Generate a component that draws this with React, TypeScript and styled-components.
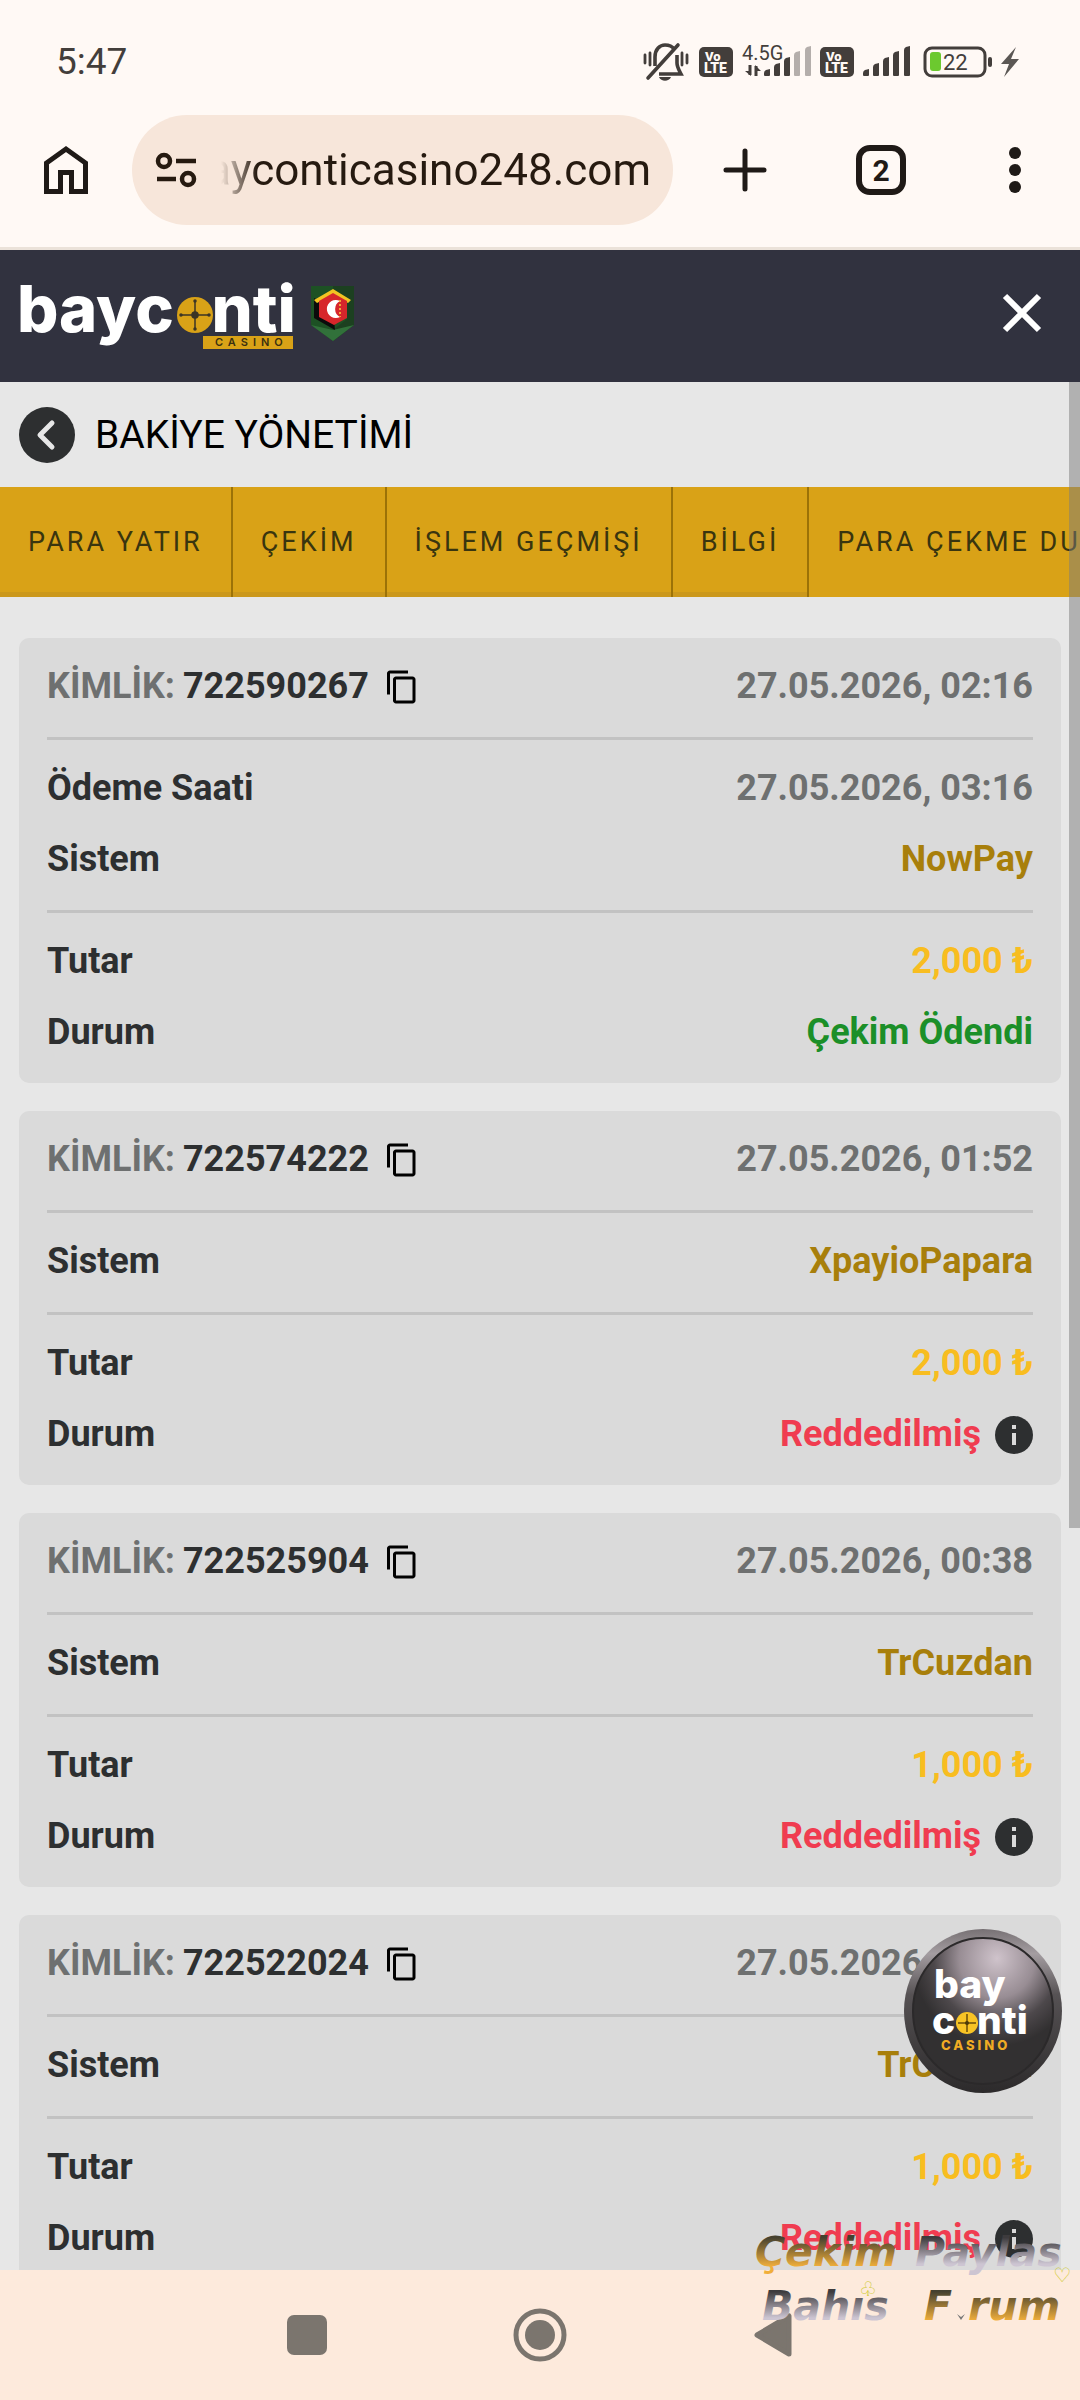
import React from "react";
import styled, { createGlobalStyle } from "styled-components";

const GlobalStyle = createGlobalStyle`
    * {
        box-sizing: border-box;
    }

    body {
        margin: 0;
        font-family: Roboto, "Liberation Sans", sans-serif;
    }

    button,
    input {
        font: inherit;
        color: inherit;
        border: 0;
        padding: 0;
        background: none;
    }

    svg {
        display: block;
        flex: none;
        overflow: visible;
    }
`;

const Screen = styled.div`
    position: relative;
    display: flex;
    flex-direction: column;
    height: 100vh;
    overflow: hidden;
    background: #e7e7e7;
`;

const StatusBar = styled.div`
    flex: none;
    height: 115px;
    padding: 8px 61px 0 56px;
    display: flex;
    align-items: center;
    justify-content: space-between;
    background: #fff9f5;
    color: #433e3b;
    font-size: 37px;
`;

const StatusIcons = styled.div`
    display: flex;
    align-items: center;
    gap: 9px;
`;

const BrowserBar = styled.div`
    flex: none;
    display: flex;
    align-items: center;
    padding-bottom: 22px;
    background: #fff9f5;
    border-bottom: 3px solid #ebe2d9;
    color: #1f1a17;
`;

const BarButton = styled.button<{ $width: number }>`
    flex: none;
    width: ${({ $width }) => $width}px;
    height: 110px;
    display: flex;
    align-items: center;
    justify-content: center;
`;

const AddressBar = styled.div`
    flex: 1;
    min-width: 0;
    height: 110px;
    margin-right: 4px;
    padding: 0 22px 0 23px;
    display: flex;
    align-items: center;
    gap: 24px;
    border-radius: 55px;
    background: #f7e6da;
`;

const AddressClip = styled.div`
    flex: 1;
    min-width: 0;
    display: flex;
    justify-content: flex-end;
    overflow: hidden;
    mask-image: linear-gradient(to right, transparent, #000 36px);
`;

const AddressInput = styled.input`
    flex: none;
    width: 520px;
    height: 64px;
    font-size: 44px;
    text-align: right;
    color: #261a10;
    outline: none;
`;

const SiteHeader = styled.header`
    flex: none;
    height: 132px;
    padding: 0 34px 6px 20px;
    display: flex;
    align-items: center;
    justify-content: space-between;
    background: #31323f;
`;

const LogoLink = styled.a`
    display: flex;
`;

const IconButton = styled.button`
    display: flex;
    align-items: center;
    justify-content: center;
`;

const Panel = styled.main`
    position: relative;
    flex: 1;
    min-height: 0;
    overflow: hidden;
`;

const TitleRow = styled.div`
    height: 105px;
    padding: 0 19px;
    display: flex;
    align-items: center;
    gap: 20px;
`;

const Title = styled.h1`
    margin: 0;
    font-size: 39px;
    font-weight: 400;
    line-height: 48px;
    color: #000;
`;

const Tabs = styled.nav`
    height: 110px;
    display: flex;
    overflow: hidden;
    background: #d9a217;
`;

const Tab = styled.a<{ $active?: boolean }>`
    flex: none;
    padding: 0 28px;
    line-height: 110px;
    font-size: 27px;
    letter-spacing: 3px;
    white-space: nowrap;
    text-decoration: none;
    color: #39350f;
    box-shadow: inset 0 -5px ${({ $active }) => ($active ? "#d9a217" : "#cb981b")};

    &:not(:last-child) {
        border-right: 2px solid #9c7207;
    }
`;

const CardList = styled.div`
    padding: 41px 19px 28px;
    display: flex;
    flex-direction: column;
    gap: 28px;
`;

const Card = styled.article`
    padding: 0 28px;
    border-radius: 10px;
    background: #dadada;
    font-size: 36px;
    font-weight: 700;
    color: #2d2f30;
`;

const Section = styled.div`
    padding: 28px 0 30px;
    display: flex;
    flex-direction: column;
    gap: 30px;

    &:not(:last-child) {
        border-bottom: 3px solid #c2c2c2;
    }
`;

const Row = styled.div`
    display: flex;
    align-items: center;
    justify-content: space-between;
    height: 41px;
    line-height: 41px;
`;

const Identity = styled.div`
    display: flex;
    align-items: center;
    gap: 8px;
`;

const Muted = styled.span`
    color: #6e7070;
`;

const Value = styled.span<{ $color: string }>`
    display: flex;
    align-items: center;
    gap: 14px;
    color: ${({ $color }) => $color};
`;

const CopyButton = styled(IconButton)`
    margin-left: 7px;
`;

const ScrollThumb = styled.div`
    position: absolute;
    top: 0;
    right: 0;
    width: 11px;
    height: 1146px;
    background: rgba(124, 124, 124, 0.5);
`;

const ChatBubble = styled.button`
    position: absolute;
    right: 18px;
    bottom: 177px;
`;

const NavBar = styled.nav`
    flex: none;
    height: 130px;
    display: flex;
    align-items: center;
    justify-content: center;
    background: #fdeadc;
    color: #7b756e;
`;

const NavButton = styled(IconButton)`
    width: 233px;
    height: 130px;
`;

const Watermark = styled.div`
    position: absolute;
    right: 0;
    bottom: 68px;
    pointer-events: none;
`;

const BellOffIcon = () => (
    <svg width="47" height="40" viewBox="0 0 47 40" fill="none" stroke="#433e3b" strokeWidth="3.6">
        <path d="M12 24V15C12 7 17 3 22 3c4 0 7 1 9 4" />
        <path d="M34 13v8c0 4 2 7 4 11H16" />
        <path d="M5 36L35 3" strokeLinecap="round" />
        <path d="M2 13v8M7 11v12M39 11v12M44 13v8" strokeWidth="2.8" strokeLinecap="round" />
        <path d="M16 35h12c-2 5-10 5-12 0z" fill="#433e3b" stroke="none" />
    </svg>
);

const VolteIcon = () => (
    <svg width="34" height="30" viewBox="0 0 34 30" fontFamily="Roboto, sans-serif" fontWeight="900" fill="#fff9f5">
        <rect width="34" height="30" rx="5" fill="#433e3b" />
        <text x="6" y="14" fontSize="13">Vo</text>
        <text x="5" y="26" fontSize="14">LTE</text>
    </svg>
);

const bars = [
    { x: 0, h: 7 },
    { x: 10, h: 13 },
    { x: 20, h: 19 },
    { x: 30, h: 25 },
    { x: 41, h: 30 },
];

const SignalBars: React.FC<{ x?: number; weak?: boolean }> = ({ x = 0, weak }) => (
    <g transform={`translate(${x} 0)`} fill="#433e3b">
        {bars.map((bar, i) => (
            <path
                key={bar.x}
                d={`M${bar.x} ${31 - bar.h + 4}q0-2 2-3l4-1v${bar.h - 1}q0 1-1 1h-4q-1 0-1-1z`}
                opacity={weak && i > 2 ? 0.4 : 1}
            />
        ))}
    </g>
);

const MobileDataIcon = () => (
    <svg width="69" height="34" viewBox="0 0 69 34">
        <text x="0" y="15" fontFamily="Roboto, sans-serif" fontSize="20" fill="#433e3b">4.5G</text>
        <path d="M8 20v10M14 31V21" stroke="#433e3b" strokeWidth="3" />
        <path d="M3 26h6v5zM13 20l6 6h-6z" fill="#433e3b" />
        <SignalBars x={22} weak />
    </svg>
);

const SignalIcon = () => (
    <svg width="48" height="34" viewBox="0 0 48 34">
        <SignalBars />
    </svg>
);

const BatteryIcon = () => (
    <svg width="72" height="32" viewBox="0 0 72 32">
        <rect x="5" y="2" width="60" height="28" rx="7" fill="none" stroke="#433e3b" strokeWidth="3" />
        <rect x="68" y="11" width="4" height="10" rx="2" fill="#433e3b" />
        <rect x="10" y="6" width="11" height="19" rx="3" fill="#6cc92f" />
        <text x="23" y="24" fontFamily="Roboto, sans-serif" fontSize="22" fill="#433e3b">22</text>
    </svg>
);

const BoltIcon = () => (
    <svg width="18" height="30" viewBox="0 0 18 30">
        <path d="M15 0L0 17h8L3 30l15-18h-8z" fill="#5b5754" />
    </svg>
);

const HomeIcon = () => (
    <svg width="44" height="50" viewBox="0 0 44 50" fill="none" stroke="currentColor" strokeWidth="5">
        <path d="M2.500 46.500V18L22 4l19.500 14v28.500H27.500v-19h-11v19z" />
    </svg>
);

const TuneIcon = () => (
    <svg width="42" height="36" viewBox="0 0 42 36" fill="none" stroke="#261a10" strokeWidth="4.500">
        <circle cx="9" cy="9" r="6" />
        <path d="M21 9h20M2 27h19" />
        <circle cx="33" cy="27" r="6" />
    </svg>
);

const PlusIcon = () => (
    <svg width="44" height="44" viewBox="0 0 44 44" stroke="currentColor" strokeWidth="5" strokeLinecap="round">
        <path d="M22 3v38M3 22h38" />
    </svg>
);

const TabCountIcon = () => (
    <svg width="50" height="50" viewBox="0 0 50 50">
        <rect x="3" y="3" width="44" height="44" rx="11" fill="none" stroke="currentColor" strokeWidth="6" />
        <text x="25" y="36" textAnchor="middle" fontFamily="Roboto, sans-serif" fontSize="30" fontWeight="700" fill="currentColor">
            2
        </text>
    </svg>
);

const DotsIcon = () => (
    <svg width="12" height="46" viewBox="0 0 12 46" fill="currentColor">
        <circle cx="6" cy="6" r="6" />
        <circle cx="6" cy="23" r="6" />
        <circle cx="6" cy="40" r="6" />
    </svg>
);

const SiteLogo = () => (
    <svg width="336" height="72" viewBox="0 -3 336 72">
        <g fontFamily="Inter, sans-serif" fontWeight="800" fontSize="65" fill="#fff">
            <text x="-3" y="52">bayc</text>
            <text x="276" y="52" textAnchor="end">nti</text>
        </g>
        <circle cx="175" cy="35" r="18" fill="#d9a217" />
        <g stroke="#3b3526" strokeWidth="1.500" fill="#3b3526">
            <path d="M175 21v28M161 35h28" />
            <circle cx="175" cy="35" r="3" />
            <circle cx="175" cy="21" r="1" />
            <circle cx="175" cy="49" r="1" />
            <circle cx="161" cy="35" r="1" />
            <circle cx="189" cy="35" r="1" />
        </g>
        <rect x="183" y="56" width="90" height="13" fill="#d9a217" />
        <text x="195" y="66" fontFamily="Inter, sans-serif" fontWeight="600" fontSize="11" letterSpacing="5" fill="#3b3010">
            CASINO
        </text>
        <path d="M291 6h43v39l-21 16-22-16z" fill="#1d5124" />
        <path d="M313 6h21v39l-21 16V50l14-11V19l-14-9z" fill="#1c4020" />
        <path d="M291 45l22 5 21-5-21 16z" fill="#31713a" />
        <path d="M294 18l19 12 2 20-21-12z" fill="#0b0b0b" />
        <path d="M294 20l19-11 18 11-3 3-15-8-16 8z" fill="#f3c322" />
        <path d="M299 21l14-8 14 8v17l-13 7-15-8z" fill="#d7262b" />
        <path d="M320 21a9 9 0 1 0 0 16 9 9 0 0 1 0-16z" fill="#fff" />
        <path d="M320 20v17" stroke="#f3a53a" strokeWidth="2" strokeDasharray="2 2" />
    </svg>
);

const CloseIcon = () => (
    <svg width="48" height="48" viewBox="0 0 48 48" stroke="#fff" strokeWidth="6">
        <path d="M7 7l34 34M41 7L7 41" />
    </svg>
);

const BackIcon = () => (
    <svg width="56" height="56" viewBox="0 0 56 56" fill="none">
        <circle cx="28" cy="28" r="28" fill="#2d2f30" />
        <path d="M33 16L21 28l12 12" stroke="#e7e7e7" strokeWidth="5" strokeLinecap="round" strokeLinejoin="round" />
    </svg>
);

const CopyIcon = () => (
    <svg width="36" height="36" viewBox="0 0 24 24" fill="#000">
        <path d="M16 1H4c-1.100 0-2 .9-2 2v14h2V3h12V1zm3 4H8c-1.100 0-2 .9-2 2v14c0 1.100.9 2 2 2h11c1.100 0 2-.9 2-2V7c0-1.100-.9-2-2-2zm0 16H8V7h11v14z" />
    </svg>
);

const InfoIcon = () => (
    <svg width="38" height="38" viewBox="0 0 38 38">
        <circle cx="19" cy="19" r="19" fill="#2d2f30" />
        <path d="M17 9h4v4h-4zM17 17h4v12h-4z" fill="#dadada" />
    </svg>
);

const BubbleLogo = () => (
    <svg width="158" height="164" viewBox="0 0 158 164">
        <defs>
            <linearGradient id="rim" x1="0" y1="0" x2="0" y2="1">
                <stop offset="0" stopColor="#777174" />
                <stop offset="0.15" stopColor="#a49da1" />
                <stop offset="0.4" stopColor="#565254" />
                <stop offset="1" stopColor="#2c2a2b" />
            </linearGradient>
            <radialGradient id="face" cx="0.6" cy="0.14" r="0.6">
                <stop offset="0" stopColor="#cfc3cb" />
                <stop offset="0.45" stopColor="#988d94" />
                <stop offset="0.75" stopColor="#4d484b" />
                <stop offset="1" stopColor="#323031" />
            </radialGradient>
        </defs>
        <ellipse cx="79" cy="82" rx="79" ry="82" fill="url(#rim)" />
        <ellipse cx="79" cy="82" rx="70" ry="73" fill="url(#face)" stroke="#2b292a" strokeWidth="2" />
        <g fontFamily="Inter, sans-serif" fontWeight="800" fontSize="39" fill="#fff">
            <text x="30" y="69">bay</text>
            <text x="28" y="105">c</text>
            <text x="73" y="105">nti</text>
        </g>
        <circle cx="63" cy="94" r="11" fill="#f7c325" />
        <path d="M63 85v18M54 94h18" stroke="#8d6a10" strokeWidth="2" />
        <circle cx="63" cy="94" r="2" fill="#4b3908" />
        <text x="37" y="121" fontFamily="Inter, sans-serif" fontWeight="800" fontSize="13" letterSpacing="3" fill="#f0ac24">
            CASINO
        </text>
    </svg>
);

const WatermarkArt = () => (
    <svg width="326" height="106" viewBox="0 0 326 106" fontFamily='"DejaVu Sans", sans-serif'>
        <defs>
            <linearGradient id="gold" x1="0" y1="0" x2="0" y2="1">
                <stop offset="0.2" stopColor="#45412f" />
                <stop offset="0.8" stopColor="#f0ae3b" />
            </linearGradient>
            <linearGradient id="silver" x1="0" y1="0" x2="0" y2="1">
                <stop offset="0.2" stopColor="#3d3b3d" />
                <stop offset="0.75" stopColor="#cdc5d2" />
            </linearGradient>
        </defs>
        <g fontSize="41" fontWeight="700" fontStyle="italic">
            <text x="1" y="40" fill="url(#gold)">Çekim</text>
            <text x="161" y="40" fill="url(#silver)">Paylas</text>
            <text x="8" y="94" fill="url(#silver)">Bahıs</text>
            <text x="170" y="94" fill="url(#gold)">F</text>
            <text x="214" y="94" fill="url(#gold)">rum</text>
        </g>
        <g fontSize="20" fill="#cfc92c">
            <text x="105" y="70">♧</text>
            <text x="299" y="56">♡</text>
        </g>
        <path d="M203 88l4 6 4-6-4 3z" fill="#777" />
    </svg>
);

type Transaction = {
    id: string;
    date: string;
    paidAt?: string;
    system: string;
    amount: string;
    paid?: boolean;
};

const tabs = ["PARA YATIR", "ÇEKİM", "İŞLEM GEÇMİŞİ", "BİLGİ", "PARA ÇEKME DURUMU"];

const transactions: Transaction[] = [
    {
        id: "722590267",
        date: "27.05.2026, 02:16",
        paidAt: "27.05.2026, 03:16",
        system: "NowPay",
        amount: "2,000 ₺",
        paid: true,
    },
    { id: "722574222", date: "27.05.2026, 01:52", system: "XpayioPapara", amount: "2,000 ₺" },
    { id: "722525904", date: "27.05.2026, 00:38", system: "TrCuzdan", amount: "1,000 ₺" },
    { id: "722522024", date: "27.05.2026, 00:30", system: "TrCuzdan", amount: "1,000 ₺" },
];

const TransactionCard: React.FC<{ item: Transaction }> = ({ item }) => (
    <Card>
        <Section>
            <Row>
                <Identity>
                    <Muted>KİMLİK:</Muted>
                    <span>{item.id}</span>
                    <CopyButton aria-label="Kopyala">
                        <CopyIcon />
                    </CopyButton>
                </Identity>
                <Muted>{item.date}</Muted>
            </Row>
        </Section>
        <Section>
            {item.paidAt && (
                <Row>
                    <span>Ödeme Saati</span>
                    <Muted>{item.paidAt}</Muted>
                </Row>
            )}
            <Row>
                <span>Sistem</span>
                <Value $color="#a87f0b">{item.system}</Value>
            </Row>
        </Section>
        <Section>
            <Row>
                <span>Tutar</span>
                <Value $color="#f8bd20">{item.amount}</Value>
            </Row>
            <Row>
                <span>Durum</span>
                {item.paid ? (
                    <Value $color="#1b8f28">Çekim Ödendi</Value>
                ) : (
                    <Value $color="#f03c50">
                        Reddedilmiş
                        <IconButton aria-label="Bilgi">
                            <InfoIcon />
                        </IconButton>
                    </Value>
                )}
            </Row>
        </Section>
    </Card>
);

const App: React.FC = () => {
    return (
        <Screen>
            <GlobalStyle />
            <StatusBar>
                <span>5:47</span>
                <StatusIcons>
                    <BellOffIcon />
                    <VolteIcon />
                    <MobileDataIcon />
                    <VolteIcon />
                    <SignalIcon />
                    <BatteryIcon />
                    <BoltIcon />
                </StatusIcons>
            </StatusBar>
            <BrowserBar>
                <BarButton $width={132} aria-label="Home">
                    <HomeIcon />
                </BarButton>
                <AddressBar>
                    <IconButton aria-label="Site settings">
                        <TuneIcon />
                    </IconButton>
                    <AddressClip>
                        <AddressInput aria-label="Address" readOnly value="bayconticasino248.com" />
                    </AddressClip>
                </AddressBar>
                <BarButton $width={136} aria-label="New tab">
                    <PlusIcon />
                </BarButton>
                <BarButton $width={136} aria-label="Tabs">
                    <TabCountIcon />
                </BarButton>
                <BarButton $width={131} aria-label="Menu">
                    <DotsIcon />
                </BarButton>
            </BrowserBar>
            <SiteHeader>
                <LogoLink href="#" aria-label="bayconti casino">
                    <SiteLogo />
                </LogoLink>
                <IconButton aria-label="Kapat">
                    <CloseIcon />
                </IconButton>
            </SiteHeader>
            <Panel>
                <TitleRow>
                    <IconButton aria-label="Geri">
                        <BackIcon />
                    </IconButton>
                    <Title>BAKİYE YÖNETİMİ</Title>
                </TitleRow>
                <Tabs>
                    {tabs.map((tab, i) => (
                        <Tab key={tab} href="#" $active={i === tabs.length - 1}>
                            {tab}
                        </Tab>
                    ))}
                </Tabs>
                <CardList>
                    {transactions.map((item) => (
                        <TransactionCard key={item.id} item={item} />
                    ))}
                </CardList>
                <ScrollThumb />
                <ChatBubble aria-label="bayconti casino">
                    <BubbleLogo />
                </ChatBubble>
            </Panel>
            <NavBar>
                <NavButton aria-label="Recents">
                    <svg width="40" height="40" viewBox="0 0 40 40">
                        <rect width="40" height="40" rx="7" fill="currentColor" />
                    </svg>
                </NavButton>
                <NavButton aria-label="Home screen">
                    <svg width="54" height="54" viewBox="0 0 54 54">
                        <circle cx="27" cy="27" r="24" fill="none" stroke="currentColor" strokeWidth="5" />
                        <circle cx="27" cy="27" r="15" fill="currentColor" />
                    </svg>
                </NavButton>
                <NavButton aria-label="Back">
                    <svg width="38" height="44" viewBox="0 0 38 44">
                        <path d="M35 3v38L3 22z" fill="currentColor" stroke="currentColor" strokeWidth="5" strokeLinejoin="round" />
                    </svg>
                </NavButton>
            </NavBar>
            <Watermark>
                <WatermarkArt />
            </Watermark>
        </Screen>
    );
};

export default App;
